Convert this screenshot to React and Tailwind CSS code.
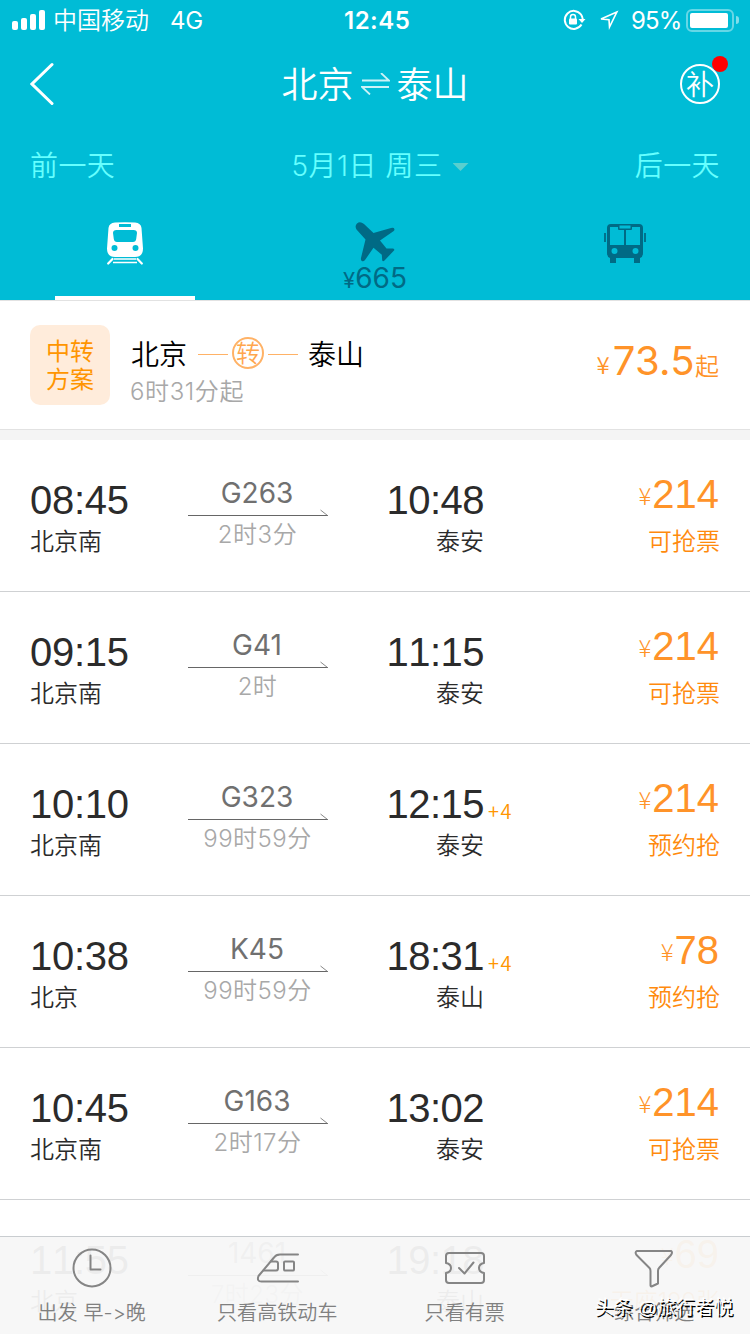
import clsx from 'clsx';

const trains = [
  { depart: '08:45', from: '北京南', no: 'G263', duration: '2时3分', arrive: '10:48', to: '泰安', price: '214', status: '可抢票' },
  { depart: '09:15', from: '北京南', no: 'G41', duration: '2时', arrive: '11:15', to: '泰安', price: '214', status: '可抢票' },
  { depart: '10:10', from: '北京南', no: 'G323', duration: '99时59分', arrive: '12:15', extra: '+4', to: '泰安', price: '214', status: '预约抢' },
  { depart: '10:38', from: '北京', no: 'K45', duration: '99时59分', arrive: '18:31', extra: '+4', to: '泰山', price: '78', status: '预约抢' },
  { depart: '10:45', from: '北京南', no: 'G163', duration: '2时17分', arrive: '13:02', to: '泰安', price: '214', status: '可抢票' },
  { depart: '11:55', from: '北京', no: '1461', duration: '7时23分', arrive: '19:18', to: '泰山', price: '69', status: '无座199张' },
];

const StatusBar = () => (
  <div className="flex h-10 items-center text-white">
    <svg className="ml-3 shrink-0" width="33" height="20" viewBox="0 0 33 20" fill="currentColor">
      <rect x="0" y="11" width="6" height="9" rx="2" />
      <rect x="9" y="8" width="6" height="12" rx="2" />
      <rect x="18" y="4" width="6" height="16" rx="2" />
      <rect x="27" y="0" width="6" height="20" rx="2" />
    </svg>
    <span className="ml-2 w-[117px] pt-0.5 text-2xl">中国移动</span>
    <span className="w-[174px] pt-0.5 text-2xl font-normal tracking-[-0.3px]">4G</span>
    <span className="w-[219px] pt-0.5 text-2xl font-semibold tracking-[0.5px]">12:45</span>
    <svg className="shrink-0" width="23" height="22" viewBox="0 0 23 22" fill="none">
      <path d="M18.500 15.500A9 9 0 1 1 18 5.500Q19.500 7.500 19.700 10" stroke="white" strokeWidth="2" />
      <path d="M15.500 10h7l-3.500 4z" fill="white" />
      <rect x="6" y="9.500" width="8" height="6" rx="1" fill="white" />
      <path d="M7.500 10V8a2.500 2.500 0 0 1 5 0v2" stroke="white" strokeWidth="1.500" />
    </svg>
    <svg className="ml-[13px] shrink-0" width="20" height="20" viewBox="0 0 20 20" fill="none" stroke="white" strokeWidth="1.600">
      <path d="M17.800 2L2 9l8 .700.500 7.300z" />
    </svg>
    <span className="ml-3 w-[55px] pt-0.5 text-2xl font-normal tracking-[-0.9px]">95%</span>
    <div className="h-[23px] w-12 shrink-0 rounded-md border-2 border-white/40 p-0.5">
      <div className="h-full w-[38px] rounded-[2px] bg-white"></div>
    </div>
    <div className="ml-[2px] h-[8px] w-[3px] rounded-r-full bg-white/50"></div>
  </div>
);

const TrainIcon = () => (
  <svg className="shrink-0" width="36" height="44" viewBox="0 0 36 44" fill="none">
    <path fillRule="evenodd" fill="white" d="M8 .5Q18-.2 28 .5 34 1 34.500 6L36 26.500Q36 35 28 35H8Q0 35 0 26.500L1.500 6Q2 1 8 .5zM12 2v3h12V2zM9.500 8Q6 8 6 11l.8 6q.5 3 3.200 3h16q2.700 0 3.200-3l.8-6q0-3-3.500-3zM7.500 23a3 3 0 1 0 0 6 3 3 0 0 0 0-6zM28.500 23a3 3 0 1 0 0 6 3 3 0 0 0 0-6z" />
    <path d="M7 37h22M6 40.500h24" stroke="white" strokeWidth="1.600" />
    <path d="M5.500 37L1.200 41.500M30.500 37l4.300 4.500" stroke="white" strokeWidth="2.200" strokeLinecap="round" />
  </svg>
);

const PlaneIcon = () => (
  <svg className="shrink-0" width="40" height="40" viewBox="0 0 40 40" fill="#006a85">
    <path d="M1.500 7.500Q-.5 4 2 1.500q3-2.500 7 .5l9.500 9L36 6q3-.6 3.400 1 .3 1.300-1 2.200L25 18.500l6.500 8h6.500q2 .6 1 2L29.500 38.500q-1.800 1.400-2.300-.3l-.4-5.400-8.300-7L10 38q-1.400 1.800-3.200 1-1.200-.7-.8-3L10.500 17.500z" />
  </svg>
);

const BusIcon = () => (
  <svg className="shrink-0" width="42" height="40" viewBox="0 0 42 40" fill="none">
    <path fillRule="evenodd" fill="#006a85" d="M7 0h28q4 0 4 4v25q0 4-3 5v5h-6v-5H12v5H6v-5q-3-1-3-5V4q0-4 4-4zM6 3v18h14V6h-5q-1 0-1-1V3zM28 3v2q0 1-1 1h-5v15h14V3zM15.500 1.500V4.500h11v-3zM10.500 24a3 3 0 1 0 0 6 3 3 0 0 0 0-6zM31.500 24a3 3 0 1 0 0 6 3 3 0 0 0 0-6z" />
    <path d="M1 9v9M41 9v9" stroke="#006a85" strokeWidth="1.800" />
  </svg>
);

const Header = () => (
  <div className="h-[300px] shrink-0 bg-[#00bcd6]">
    <StatusBar />
    <div className="flex h-[88px] items-center justify-between px-[30px] text-white">
      <svg className="w-10" height="44" viewBox="0 0 40 44" fill="none" stroke="currentColor" strokeWidth="3" strokeLinecap="round">
        <path d="M22 2.500L2 22l20 19.500" />
      </svg>
      <div className="flex items-center text-4xl leading-9">
        <span className="pt-px">北京</span>
        <svg className="mx-[7px]" width="29" height="22" viewBox="0 0 29 22" fill="none" stroke="currentColor" strokeOpacity=".8" strokeWidth="1.800">
          <path d="M1 7.500h27L20 0M28 14H1l8 7.500" />
        </svg>
        <span className="pt-px">泰山</span>
      </div>
      <div className="relative flex h-10 w-10 items-center justify-center rounded-full border-2 border-white text-[28px] leading-7">
        <span className="pt-px">补</span>
        <div className="absolute -top-[10px] -right-[10px] h-4 w-4 rounded-full bg-[#ff0000]"></div>
      </div>
    </div>
    <div className="flex h-[72px] items-center justify-between px-[30px] pt-1 text-[28px] text-[#66ffff]">
      <span className="tracking-[0.4px]">前一天</span>
      <div className="flex items-center pl-[10px]">
        <span className="tracking-[0.5px]">5月1日 周三</span>
        <div className="mt-0.5 ml-[10px] h-2 w-4 bg-[#59cfcf] [clip-path:polygon(0_0,100%_0,50%_100%)]"></div>
      </div>
      <span className="tracking-[0.4px]">后一天</span>
    </div>
    <div className="grid h-[100px] grid-cols-3">
      <div className="flex flex-col items-center justify-between pt-[22px]">
        <TrainIcon />
        <div className="h-1 w-[140px] bg-white"></div>
      </div>
      <div className="flex flex-col items-center pt-[22px] text-[#006a85]">
        <PlaneIcon />
        <div className="text-[28px] leading-8 font-normal">
          <span className="text-[22px]">¥</span>665
        </div>
      </div>
      <div className="flex justify-center pt-6">
        <BusIcon />
      </div>
    </div>
  </div>
);

const TransferCard = () => (
  <div className="flex h-[130px] shrink-0 border-y border-[#e2e2e2] bg-white px-[30px] pt-6">
    <div className="flex h-20 w-20 flex-col items-center justify-center rounded-[10px] bg-[#ffecdb] pt-0.5 text-2xl leading-7 font-normal text-[#ff9500]">
      <span>中转</span>
      <span>方案</span>
    </div>
    <div className="ml-[21px] flex-1 pt-3">
      <div className="flex h-8 items-center text-[28px] text-black">
        <span className="pt-[3px]">北京</span>
        <div className="mt-[3px] ml-[11px] h-[1.5px] w-[30px] bg-[#ffb266]"></div>
        <div className="mx-1 flex h-8 w-8 items-center justify-center rounded-full border-2 border-[#ffb266] text-2xl leading-6 text-[#ffa64d]">
          <span className="pt-0.5">转</span>
        </div>
        <div className="mt-[3px] mr-[10px] h-[1.5px] w-[30px] bg-[#ffb266]"></div>
        <span className="pt-[3px]">泰山</span>
      </div>
      <div className="mt-[9px] -ml-px text-2xl leading-7 tracking-[0.6px] text-[#a8a8a8]">6时31分起</div>
    </div>
    <div className="flex items-baseline pt-4 pr-px leading-10 text-[#ff9329]">
      <span className="relative -top-px mr-[3px] font-['Noto_Sans_CJK_SC',sans-serif] text-2xl">¥</span>
      <span className="text-[40px] font-normal tracking-[0.3px]">73.5</span>
      <span className="text-2xl">起</span>
    </div>
  </div>
);

const TrainRow = ({ train }) => (
  <div className="flex h-[152px] shrink-0 border-b border-[#cfd1d3] px-[30px] text-[#2b2b2b]">
    <div className="w-[158px] pt-10">
      <div className="font-['Liberation_Sans',sans-serif] text-[40px] leading-10 tracking-[-0.3px] [font-kerning:none]">{train.depart}</div>
      <div className="mt-[10px] text-2xl leading-6">{train.from}</div>
    </div>
    <div className="flex w-[140px] flex-col items-center pt-[39px]">
      <div className="pr-0.5 text-[28px] leading-7 font-normal text-[#707070]">{train.no}</div>
      <svg className="mt-[2px]" width="140" height="7" viewBox="0 0 140 7" fill="none">
        <path d="M0 6.500h140" stroke="#666" />
        <path d="M132.500 1l7 5.500" stroke="#888" />
      </svg>
      <div className="mt-[5px] pr-px text-2xl leading-7 tracking-[0.5px] text-[#a8a8a8]">{train.duration}</div>
    </div>
    <div className="ml-[58px] w-[98px] pt-10 text-right">
      <div className="font-['Liberation_Sans',sans-serif] text-[40px] leading-10 tracking-[-0.5px] [font-kerning:none]">{train.arrive}</div>
      <div className="mt-[10px] text-2xl leading-6">{train.to}</div>
    </div>
    <div className="w-[60px] pt-[53px] pl-[4px] font-['Noto_Sans_CJK_SC',sans-serif] text-xl leading-7 tracking-[1.5px] text-[#ff9500]">{train.extra}</div>
    <div className="flex-1 pt-[34px] text-right">
      <div className="flex h-10 items-baseline justify-end pr-px leading-10 text-[#ff9329]">
        <span className="relative -top-[3px] mr-px font-['Noto_Sans_CJK_SC',sans-serif] text-2xl font-light">¥</span>
        <span className="font-['Liberation_Sans',sans-serif] text-[40px] [font-kerning:none]">{train.price}</span>
      </div>
      <div className="mt-4 text-2xl leading-6 whitespace-nowrap text-[#ff8a0d]">{train.status}</div>
    </div>
  </div>
);

const icons = {
  clock: (
    <>
      <circle cx="22" cy="22" r="18.500" />
      <path d="M20.500 9.500v14h10" />
    </>
  ),
  train: (
    <>
      <path d="M43 8.500H25q-4 0-6 3L3.500 30q-2 5.500 3 5.500H43" />
      <path d="M16 15.500h5q2 0 2 2v5q0 2-2 2H8.500" />
      <rect x="29" y="15.500" width="10" height="9" rx="1" />
    </>
  ),
  ticket: (
    <>
      <path d="M6 7h32q3 0 3 3v7q-5 1-5 5t5 5v7q0 3-3 3H6q-3 0-3-3v-7q5-1 5-5t-5-5v-7q0-3 3-3z" />
      <path d="M16 22l5.500 5.500 9-11" />
    </>
  ),
  filter: (
    <path d="M5 5h34q2 1 0 4L27 22q-1 1-1 3v12.500l-6.500 3q-1 0-1-1V25q0-2-1-3L4.500 9q-2-3 .5-4z" />
  ),
};

const filters = [
  { icon: 'clock', label: '出发 早->晚' },
  { icon: 'train', label: '只看高铁动车' },
  { icon: 'ticket', label: '只看有票' },
  { icon: 'filter', label: '综合筛选' },
];

const FilterBar = () => (
  <div className="absolute inset-x-0 bottom-0 grid h-[98px] grid-cols-4 border-t border-[#c9cdd0] bg-[#f7f7f7]/95">
    {filters.map(({ icon, label }) => (
      <div key={icon} className={clsx('flex flex-col items-center pt-[9px] text-[#858585]', (icon === 'clock' || icon === 'filter') && 'pr-1', (icon === 'train' || icon === 'ticket') && 'pr-2')}>
        <svg width="44" height="44" viewBox="0 0 44 44" fill="none" stroke="currentColor" strokeWidth="2" strokeLinecap="round" strokeLinejoin="round">
          {icons[icon]}
        </svg>
        <span className="mt-[11px] text-xl leading-6 tracking-[0.1px] text-[#808080] [font-feature-settings:'calt'_0]">{label}</span>
      </div>
    ))}
  </div>
);

export default function App() {
  return (
    <div className="relative flex h-[1334px] w-[750px] flex-col overflow-hidden bg-white font-[Inter,'Noto_Sans_CJK_SC',sans-serif] font-[350]">
      <Header />
      <TransferCard />
      <div className="h-[10px] shrink-0 bg-[#f4f4f4]"></div>
      {trains.map((train) => (
        <TrainRow key={train.depart} train={train} />
      ))}
      <FilterBar />
      <div className="absolute right-[17px] bottom-[14px] font-['Liberation_Sans','Noto_Sans_CJK_SC',sans-serif] text-[19px] leading-6 whitespace-nowrap text-white [text-shadow:1.5px_1.5px_0_#000]">
        头条 @旅行者悦
      </div>
    </div>
  );
}
